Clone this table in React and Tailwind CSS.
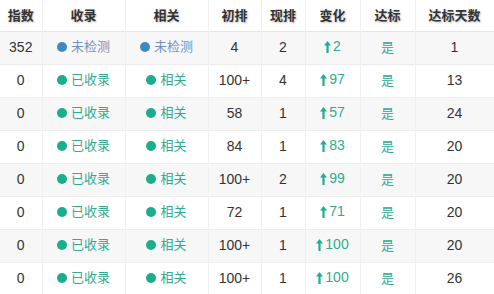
const ROWS = [
  { idx: '352', sl: 'no', xg: 'no', cp: '4', xp: '2', bh: '2', db: '是', days: '1' },
  { idx: '0', sl: 'ok', xg: 'ok', cp: '100+', xp: '4', bh: '97', db: '是', days: '13' },
  { idx: '0', sl: 'ok', xg: 'ok', cp: '58', xp: '1', bh: '57', db: '是', days: '24' },
  { idx: '0', sl: 'ok', xg: 'ok', cp: '84', xp: '1', bh: '83', db: '是', days: '20' },
  { idx: '0', sl: 'ok', xg: 'ok', cp: '100+', xp: '2', bh: '99', db: '是', days: '20' },
  { idx: '0', sl: 'ok', xg: 'ok', cp: '72', xp: '1', bh: '71', db: '是', days: '20' },
  { idx: '0', sl: 'ok', xg: 'ok', cp: '100+', xp: '1', bh: '100', db: '是', days: '20' },
  { idx: '0', sl: 'ok', xg: 'ok', cp: '100+', xp: '1', bh: '100', db: '是', days: '26' },
]

const HEADS = ['指数', '收录', '相关', '初排', '现排', '变化', '达标', '达标天数']
const WIDTHS = ['w-[42px]', 'w-[83px]', 'w-[83px]', 'w-[53px]', 'w-[44px]', 'w-[55px]', 'w-[55px]', 'w-[79px]']

function Status({ kind, okText }) {
  if (kind === 'no') {
    return (
      <span className="inline-flex items-center gap-[4px]">
        <span className="w-[10px] h-[10px] rounded-full bg-[#3f89c2]" />
        <span className="text-[#7190c4]">未检测</span>
      </span>
    )
  }
  return (
    <span className="inline-flex items-center gap-[4px]">
      <span className="w-[10px] h-[10px] rounded-full bg-[#1bae8c]" />
      <span className="text-[#30ab90]">{okText}</span>
    </span>
  )
}

function UpArrow() {
  return (
    <svg width="7" height="12" viewBox="0 0 7 12" className="inline-block mr-[2px]">
      <path d="M3.5 0 L7 4.5 L4.6 4.5 L4.6 12 L2.4 12 L2.4 4.5 L0 4.5 Z" fill="#1fae8e" />
    </svg>
  )
}

const cell = 'text-center p-0 border-r border-[#f0f0f0]'

export default function App() {
  return (
    <div className="w-[494px] h-[294px] overflow-hidden bg-white font-['Liberation_Sans','Noto_Sans_CJK_SC',sans-serif] text-[13px] text-[#333]">
      <table className="table-fixed border-collapse w-[494px]">
        <thead>
          <tr className="h-[31px] border-b border-[#e6e6e6]">
            {HEADS.map((h, i) => (
              <th key={h} className={`${WIDTHS[i]} font-bold text-[#333] text-center border-r border-[#f0f0f0] p-0 [text-shadow:1px_1px_2px_rgba(0,0,0,0.25)]`}>
                {h}
              </th>
            ))}
          </tr>
        </thead>
        <tbody>
          {ROWS.map((r, i) => (
            <tr key={i} className={`h-[33px] border-b border-[#ececec] ${i % 2 === 0 ? 'bg-[#f7f7f7]' : 'bg-white'}`}>
              <td className={`${cell} text-[14px]`}>{r.idx}</td>
              <td className={cell}><Status kind={r.sl} okText="已收录" /></td>
              <td className={cell}><Status kind={r.xg} okText="相关" /></td>
              <td className={`${cell} text-[14px]`}>{r.cp}</td>
              <td className={`${cell} text-[14px]`}>{r.xp}</td>
              <td className={`${cell} text-[14px] text-[#30ab90]`}>
                <span className="inline-flex items-center"><UpArrow />{r.bh}</span>
              </td>
              <td className={`${cell} text-[#30ab90]`}>{r.db}</td>
              <td className={`${cell} text-[14px]`}>{r.days}</td>
            </tr>
          ))}
        </tbody>
      </table>
    </div>
  )
}
